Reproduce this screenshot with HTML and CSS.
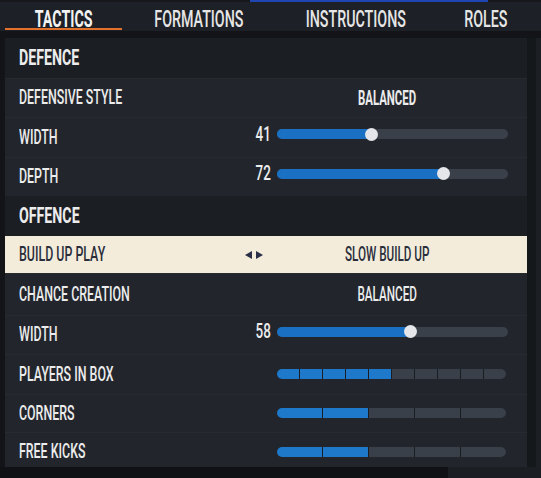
FILE: index.html
```html
<!DOCTYPE html>
<html>
<head>
<meta charset="utf-8">
<link rel="stylesheet" href="styles.css">
</head>
<body>
<div class="topstrip"><div class="topstrip-blue"></div></div>
<nav class="tabs">
  <div class="tab active"><span class="cz">TACTICS</span></div>
  <div class="tab"><span class="cz">FORMATIONS</span></div>
  <div class="tab"><span class="cz">INSTRUCTIONS</span></div>
  <div class="tab"><span class="cz">ROLES</span></div>
</nav>
<div class="main">
  <section class="panel">
    <div class="row head"><span class="label cz">DEFENCE</span></div>
    <div class="row"><span class="label cz">DEFENSIVE STYLE</span><span class="value strong cz">BALANCED</span></div>
    <div class="row tall">
      <span class="label cz">WIDTH</span><span class="num cz">41</span>
      <div class="slider"><div class="fill" style="width:41%"><div class="knob"></div></div></div>
    </div>
    <div class="row">
      <span class="label cz">DEPTH</span><span class="num cz">72</span>
      <div class="slider"><div class="fill" style="width:72%"><div class="knob"></div></div></div>
    </div>
    <div class="row head"><span class="label cz">OFFENCE</span></div>
    <div class="row hl">
      <span class="label cz">BUILD UP PLAY</span>
      <svg class="arrows" width="18" height="8" viewBox="0 0 18 8"><polygon points="0,4 7,0 7,8"/><polygon points="11,0 18,4 11,8"/></svg>
      <span class="value cz">SLOW BUILD UP</span>
    </div>
    <div class="row xtall"><span class="label cz">CHANCE CREATION</span><span class="value cz">BALANCED</span></div>
    <div class="row">
      <span class="label cz">WIDTH</span><span class="num cz">58</span>
      <div class="slider"><div class="fill" style="width:58%"><div class="knob"></div></div></div>
    </div>
    <div class="row tall">
      <span class="label cz">PLAYERS IN BOX</span>
      <div class="segs">
        <div class="seg on"></div><div class="seg on"></div><div class="seg on"></div><div class="seg on"></div><div class="seg on"></div>
        <div class="seg"></div><div class="seg"></div><div class="seg"></div><div class="seg"></div><div class="seg"></div>
      </div>
    </div>
    <div class="row short">
      <span class="label cz">CORNERS</span>
      <div class="segs">
        <div class="seg on"></div><div class="seg on"></div><div class="seg"></div><div class="seg"></div><div class="seg"></div>
      </div>
    </div>
    <div class="row">
      <span class="label cz">FREE KICKS</span>
      <div class="segs">
        <div class="seg on"></div><div class="seg on"></div><div class="seg"></div><div class="seg"></div><div class="seg"></div>
      </div>
    </div>
  </section>
  <div class="side"></div>
</div>
<div class="footer"><div class="footer-left"></div><div class="footer-right"></div></div>
</body>
</html>
```
FILE: styles.css
```css
html, body {
  margin: 0;
  padding: 0;
}
body {
  width: 541px;
  height: 478px;
  overflow: hidden;
  background: #121417;
  font-family: Roboto, "DejaVu Sans", sans-serif;
  color: #ececec;
}
.cz {
  display: inline-block;
  white-space: nowrap;
  line-height: 1;
  transform: scaleX(0.59);
  transform-origin: left center;
}
.topstrip {
  height: 2px;
  display: flex;
  background: #16181c;
}
.topstrip-blue {
  margin-left: 250px;
  width: 238px;
  background: #1f45b0;
}
.tabs {
  display: grid;
  grid-template-columns: 117px 145px 156px 101px;
  column-gap: 4px;
  padding-left: 5px;
  height: 29px;
  background: #1d2026;
}
.tab {
  height: 28px;
  box-sizing: border-box;
  padding-top: 4px;
  text-align: center;
  font-size: 23px;
  font-weight: 500;
  color: #e6e6e6;
}
.tab .cz {
  line-height: 23px;
  transform: scaleX(0.62);
  transform-origin: center;
}
.tab.active {
  border-bottom: 2px solid #e1712b;
  font-weight: 700;
  color: #f2f2f2;
}
.main {
  display: flex;
  margin-top: 7px;
  height: 429px;
}
.panel {
  margin-left: 5px;
  width: 522px;
  height: 429px;
  overflow: hidden;
  background: #22262c;
}
.side {
  flex: 1;
  background: #15181b;
  border-right: 5px solid #1c1f23;
}
.footer {
  display: flex;
  height: 11px;
}
.footer-left {
  width: 448px;
  background: #0f1114;
}
.footer-right {
  flex: 1;
  background: #1b1e22;
}
.row {
  display: grid;
  grid-template-columns: 228px 30px 231px 1fr;
  align-items: center;
  height: 39px;
  box-sizing: border-box;
  padding-left: 14px;
  background: #22262c;
  box-shadow: inset 0 1px 0 rgba(255, 255, 255, 0.025);
  font-size: 21px;
  font-weight: 500;
}
.row.tall { height: 40px; }
.row.xtall { height: 42px; }
.row.short { height: 38px; }
.row.head {
  height: 40px;
  background: #1b1e23;
  box-shadow: none;
  font-weight: 700;
  font-size: 21.5px;
}
.row.head .cz { transform: scaleX(0.66); }
.row.hl {
  height: 37px;
  background: #f3ecdb;
  color: #2a2e3b;
  box-shadow: none;
}
.label {
  grid-column: 1;
  grid-row: 1;
}
.value {
  grid-column: 2 / 5;
  grid-row: 1;
  justify-self: center;
  font-size: 20.5px;
  transform-origin: center;
  transform: scaleX(0.57);
}
.value.strong {
  font-weight: 700;
  font-size: 20px;
}
.arrows {
  grid-column: 2;
  grid-row: 1;
  justify-self: start;
  margin-left: -2px;
  fill: #2a3047;
}
.num {
  grid-column: 2;
  grid-row: 1;
  justify-self: end;
  margin-right: 6px;
  margin-bottom: 6px;
  transform-origin: right center;
  transform: scaleX(0.64);
}
.slider {
  grid-column: 3;
  grid-row: 1;
  height: 10px;
  margin-bottom: 6px;
  border-radius: 5px;
  background: #39404a;
  display: flex;
}
.fill {
  display: flex;
  align-items: center;
  justify-content: flex-end;
  border-radius: 5px 0 0 5px;
  background: #1a70c2;
}
.knob {
  flex: none;
  width: 13px;
  height: 13px;
  margin-right: -6.5px;
  border-radius: 50%;
  background: #e4e6ea;
}
.segs {
  grid-column: 3;
  grid-row: 1;
  width: 229px;
  height: 10px;
  display: flex;
  gap: 1px;
  border-radius: 5px;
  overflow: hidden;
  background: #1a1d22;
}
.seg {
  flex: 1;
  background: #39404a;
}
.seg.on {
  background: #1f79cb;
}
```
